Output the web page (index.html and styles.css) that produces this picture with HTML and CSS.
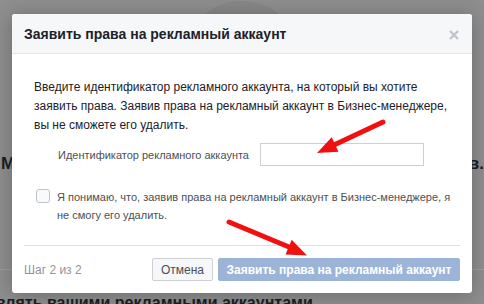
FILE: index.html
```html
<!DOCTYPE html>
<html lang="ru">
<head>
  <meta charset="UTF-8">
  <meta name="viewport" content="width=device-width, initial-scale=1.0">
  <title>Заявить права на рекламный аккаунт</title>
  <link rel="stylesheet" href="styles.css">
</head>
<body>

<!-- Page behind the dialog (dimmed) -->
<div class="page">
  <div class="avatar"></div>
  <div class="page-heading">
    <span>М</span>
    <span>в.</span>
  </div>
  <div class="page-rule"></div>
  <div class="page-subheading">Управлять вашими рекламными аккаунтами</div>
</div>

<!-- Claim ad account dialog -->
<div class="dialog">
  <div class="dialog-header">
    <h2>Заявить права на рекламный аккаунт</h2>
    <svg class="close" width="10" height="10" viewBox="0 0 10 10">
      <path d="M1 1 L9 9 M9 1 L1 9" stroke="#bec2c9" stroke-width="2.2"/>
    </svg>
  </div>

  <div class="dialog-body">
    <p class="intro">Введите идентификатор рекламного аккаунта, на который вы хотите заявить права. Заявив права на рекламный аккаунт в Бизнес-менеджере, вы не сможете его удалить.</p>

    <div class="field">
      <label for="account-id">Идентификатор рекламного аккаунта</label>
      <input type="text" id="account-id">
    </div>

    <label class="confirm">
      <span class="checkbox"></span>
      <span>Я понимаю, что, заявив права на рекламный аккаунт в Бизнес-менеджере, я не смогу его удалить.</span>
    </label>
  </div>

  <div class="dialog-footer">
    <span class="step">Шаг 2 из 2</span>
    <button class="btn-cancel">Отмена</button>
    <button class="btn-claim" disabled>Заявить права на рекламный аккаунт</button>
  </div>
</div>

<!-- Red annotation arrows -->
<svg class="arrows" width="484" height="304" viewBox="0 0 484 304">
  <line x1="383" y1="122" x2="335" y2="144.5" stroke="#f01010" stroke-width="5" stroke-linecap="round"/>
  <polygon points="317,153 338.5,151.7 331.7,137.3" fill="#f01010"/>
  <line x1="229" y1="222" x2="289" y2="247" stroke="#f01010" stroke-width="5" stroke-linecap="round"/>
  <polygon points="307,255.5 285.5,254.6 291.7,239.8" fill="#f01010"/>
</svg>

</body>
</html>
```

FILE: styles.css
```css
body {
  margin: 0;
  padding: 0;
  width: 484px;
  height: 304px;
  overflow: hidden;
  position: relative;
  background-color: #8e8e8e;
  font-family: "Liberation Sans", Arial, sans-serif;
}

/* dimmed page */
.page {
  height: 304px;
  overflow: hidden;
}

.avatar {
  width: 118px;
  height: 118px;
  margin: 1px auto 0;
  border-radius: 50%;
  background-color: #878787;
}

.page-heading {
  display: flex;
  justify-content: space-between;
  margin-top: 35px;
  padding: 0 0 0 1px;
  font-size: 17px;
  font-weight: bold;
  color: #1c1e22;
}

.page-rule {
  height: 1px;
  margin-top: 95px;
  background-color: #9b9b9b;
}

.page-subheading {
  margin-top: 24px;
  margin-left: -42px;
  font-size: 16px;
  line-height: 18px;
  font-weight: bold;
  color: #1c1e22;
  white-space: nowrap;
}

/* dialog */
.dialog {
  position: absolute;
  left: 12px;
  top: 14px;
  width: 460px;
  background-color: white;
  border-radius: 3px;
  box-shadow: 0 2px 20px rgba(0,0,0,0.25);
  overflow: hidden;
}

.dialog-header {
  display: flex;
  justify-content: space-between;
  align-items: center;
  height: 39px;
  padding: 0 12px;
  background-color: #f6f7f9;
  border-bottom: 1px solid #e5e5e5;
}

.dialog-header h2 {
  margin: 0;
  font-size: 14px;
  font-weight: bold;
  color: #1d2129;
}

.close {
  margin-right: 1px;
  margin-top: 2px;
}

.dialog-body {
  margin: 0 12px;
  padding: 14px 10px 21px;
  border-bottom: 1px solid #dddfe2;
}

.intro {
  margin: 10px 0 0;
  font-size: 12px;
  line-height: 19px;
  color: #1d2129;
}

.field {
  display: grid;
  grid-template-columns: 215px 164px;
  column-gap: 11px;
  align-items: center;
  margin-top: 8px;
}

.field label {
  text-align: right;
  font-size: 11px;
  color: #4b4f56;
}

.field input {
  box-sizing: border-box;
  height: 23px;
  margin: 0;
  border: 1px solid #ccd0d5;
  border-radius: 0;
}

.confirm {
  display: flex;
  gap: 7px;
  margin-top: 22px;
  margin-right: -8px;
  padding-left: 2px;
  font-size: 11px;
  line-height: 18px;
  color: #4b4f56;
}

.checkbox {
  flex: none;
  box-sizing: border-box;
  width: 14px;
  height: 14px;
  margin-top: 1px;
  border: 1px solid #bec3c9;
  border-radius: 3px;
  background-color: #f9fafb;
}

.dialog-footer {
  display: flex;
  align-items: center;
  gap: 5px;
  padding: 12px;
}

.step {
  flex: 1;
  font-size: 12px;
  color: #90949c;
}

.dialog-footer button {
  height: 23px;
  padding: 0;
  font-family: "Liberation Sans", Arial, sans-serif;
  white-space: nowrap;
  border-radius: 2px;
}

.btn-cancel {
  width: 61px;
  font-size: 12px;
  background-color: #f6f7f9;
  border: 1px solid #ced0d4;
  color: #4b4f56;
}

.btn-claim {
  width: 242px;
  font-size: 12px;
  font-weight: bold;
  background-color: #9cb4d8;
  border: 1px solid #9cb4d8;
  color: white;
}

.arrows {
  position: absolute;
  left: 0;
  top: 0;
}
```
